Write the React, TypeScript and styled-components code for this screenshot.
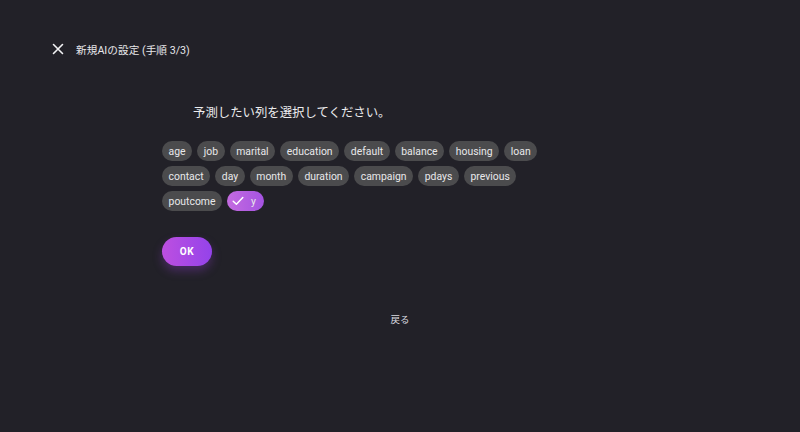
import React from "react";
import styled, { createGlobalStyle } from "styled-components";

const Global = createGlobalStyle`
  html, body { margin: 0; padding: 0; background: #222128; }
  body { font-family: Roboto, "Noto Sans CJK JP", sans-serif; color: #e4e4e6; }
  #root { width: 800px; height: 432px; }
`;

const Page = styled.div`
  width: 800px;
  height: 432px;
  background: #222128;
  display: flex;
  flex-direction: column;
  box-sizing: border-box;
`;

const Header = styled.header`
  display: flex;
  align-items: center;
  height: 22px;
  margin-top: 38px;
  padding-left: 51px;
  gap: 12px;
`;

const CloseButton = styled.button`
  width: 13px;
  height: 13px;
  padding: 0;
  border: none;
  background: transparent;
  display: flex;
  align-items: center;
  justify-content: center;
  cursor: pointer;
`;

const Title = styled.h1`
  margin: 0;
  font-size: 10.7px;
  font-weight: 400;
  color: #e6e6e8;
  font-family: Roboto, "Noto Sans CJK JP", sans-serif;
`;

const Content = styled.main`
  width: 476px;
  margin: 0 auto;
  display: flex;
  flex-direction: column;
  align-items: flex-start;
`;

const Prompt = styled.h2`
  margin: 43px 0 0 31px;
  font-size: 12.4px;
  line-height: 18px;
  font-weight: 400;
  color: #ececee;
  font-family: "Noto Sans CJK JP", sans-serif;
`;

const ChipList = styled.div`
  display: flex;
  flex-wrap: wrap;
  gap: 5px 5px;
  max-width: 400px;
  margin-top: 20px;
`;

const Chip = styled.button<{ $selected?: boolean }>`
  height: 20px;
  border: none;
  border-radius: 10px;
  padding: ${(p) => (p.$selected ? "0 8px 0 5px" : "0 6.6px")};
  display: inline-flex;
  align-items: center;
  gap: 7px;
  font-family: Roboto, sans-serif;
  font-size: 10.4px;
  color: #e8e8ea;
  background: ${(p) =>
    p.$selected ? "linear-gradient(90deg, #c46be0 0%, #a553e2 100%)" : "#4b4b4d"};
  cursor: pointer;
`;

const OkButton = styled.button`
  margin-top: 26px;
  width: 50px;
  height: 29px;
  border: none;
  border-radius: 14.5px;
  background: linear-gradient(90deg, #bd4fe0 0%, #9443ea 100%);
  box-shadow: 0 5px 10px rgba(140, 60, 200, 0.35);
  color: #ffffff;
  font-family: Roboto, sans-serif;
  font-weight: 700;
  font-size: 10px;
  letter-spacing: 0.6px;
  cursor: pointer;
`;

const Back = styled.button`
  align-self: center;
  margin-top: 46px;
  border: none;
  background: transparent;
  color: #dcdce0;
  font-size: 9.5px;
  font-family: "Noto Sans CJK JP", sans-serif;
  cursor: pointer;
  padding: 0;
`;

const columns = [
  "age", "job", "marital", "education", "default", "balance", "housing", "loan",
  "contact", "day", "month", "duration", "campaign", "pdays", "previous",
  "poutcome", "y",
];

export default function App() {
  return (
    <Page>
      <Global />
      <Header>
        <CloseButton aria-label="close">
          <svg width="12" height="12" viewBox="0 0 12 12">
            <path d="M1.5 1.5 L10.5 10.5 M10.5 1.5 L1.5 10.5" stroke="#f2f2f4" strokeWidth="1.6" strokeLinecap="round" />
          </svg>
        </CloseButton>
        <Title>新規AIの設定 (手順 3/3)</Title>
      </Header>
      <Content>
        <Prompt>予測したい列を選択してください。</Prompt>
        <ChipList>
          {columns.map((c) =>
            c === "y" ? (
              <Chip key={c} $selected>
                <svg width="12" height="10" viewBox="0 0 12 10">
                  <path d="M1.2 5.2 L4.4 8.2 L10.8 1.6" fill="none" stroke="#ffffff" strokeWidth="1.5" strokeLinecap="round" strokeLinejoin="round" />
                </svg>
                {c}
              </Chip>
            ) : (
              <Chip key={c}>{c}</Chip>
            )
          )}
        </ChipList>
        <OkButton>OK</OkButton>
        <Back>戻る</Back>
      </Content>
    </Page>
  );
}
